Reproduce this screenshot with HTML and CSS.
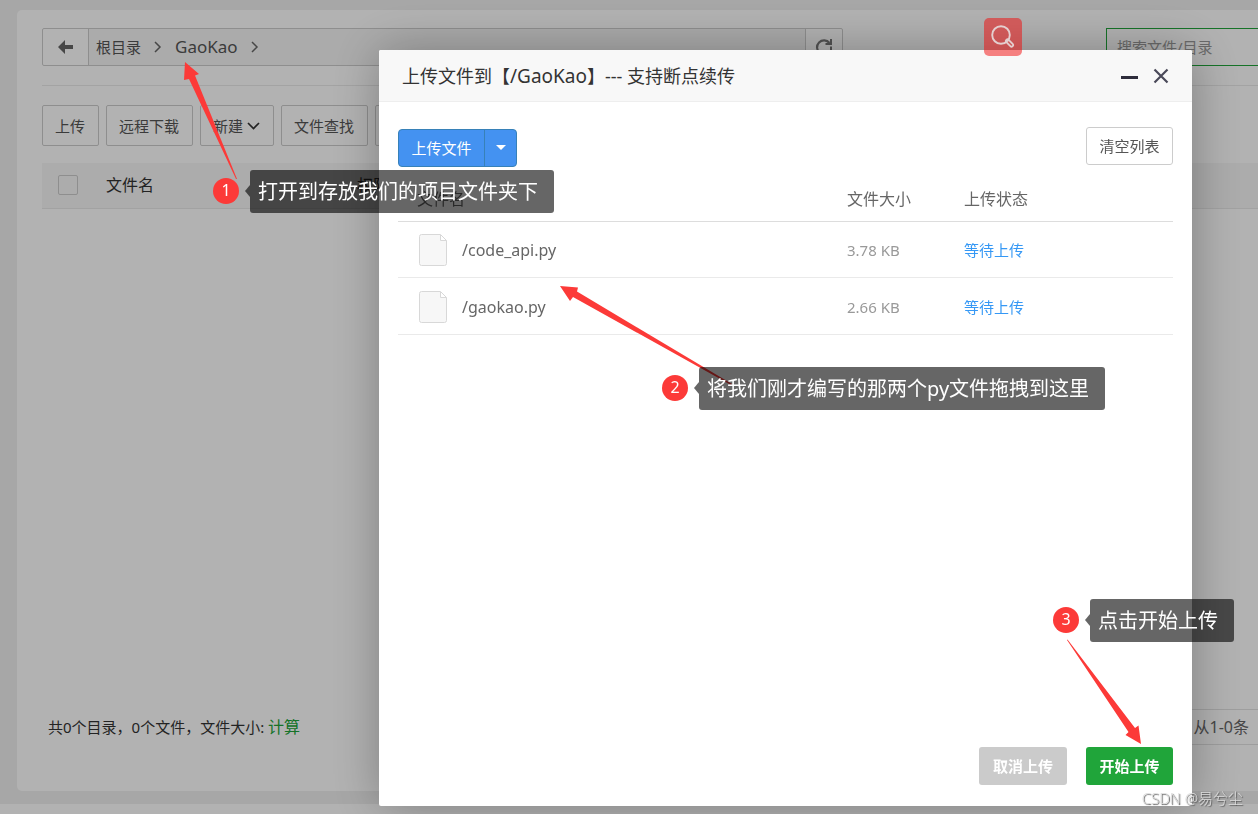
FILE: index.html
```html
<!DOCTYPE html>
<html lang="zh-CN">
<head>
<meta charset="utf-8">
<title>文件管理</title>
<link rel="stylesheet" href="styles.css">
</head>
<body>
<div class="page">
  <main class="panel">
    <div class="topbar">
      <nav class="path">
        <button class="path-back" aria-label="返回">
          <svg width="16" height="14" viewBox="0 0 16 14"><path d="M0 7 7 0V5H15V9H7V14Z" fill="#666"/></svg>
        </button>
        <div class="crumbs">
          <a href="#">根目录</a>
          <svg width="8" height="12" viewBox="0 0 8 12"><path d="M1 1 6 6 1 11" fill="none" stroke="#666" stroke-width="1.5"/></svg>
          <a href="#" class="crumb-latin">GaoKao</a>
          <svg width="8" height="12" viewBox="0 0 8 12"><path d="M1 1 6 6 1 11" fill="none" stroke="#666" stroke-width="1.5"/></svg>
        </div>
        <button class="path-refresh" aria-label="刷新">
          <svg width="18" height="18" viewBox="0 0 18 18"><path d="M14.500 5A7 7 0 1 0 15 13" fill="none" stroke="#777" stroke-width="2.200"/><path d="M16 1V6H10.500" fill="none" stroke="#777" stroke-width="2"/><path d="M16 8.500V12" stroke="#777" stroke-width="2"/></svg>
        </button>
      </nav>
      <input class="search" type="text" placeholder="搜索文件/目录" aria-label="搜索文件/目录">
    </div>
    <div class="toolbar">
      <button class="tool">上传</button>
      <button class="tool">远程下载</button>
      <button class="tool">新建 <svg width="13" height="8" viewBox="0 0 13 8"><path d="M1 1 6.500 6.500 12 1" fill="none" stroke="#333" stroke-width="1.700"/></svg></button>
      <button class="tool">文件查找</button>
      <button class="tool">收藏夹</button>
    </div>
    <table class="files">
      <thead><tr>
        <th class="col-check"><input type="checkbox" aria-label="全选"></th>
        <th class="col-name">文件名</th>
        <th>权限</th>
      </tr></thead>
    </table>
    <div class="summary">
      <p>共0个目录，0个文件，文件大小: <a href="#">计算</a></p>
      <span class="pager">从1-0条</span>
    </div>
  </main>
  <footer class="strip"></footer>
</div>

<div class="shade"></div>

<section class="dialog" role="dialog" aria-labelledby="dialog-title">
  <header class="dialog-head">
    <h1 id="dialog-title">上传文件到【<span class="dir">/GaoKao</span>】--- 支持断点续传</h1>
    <div class="dialog-controls">
      <button aria-label="最小化"><svg width="17" height="16" viewBox="0 0 17 16"><path d="M0 9.500H17" stroke="#2e2d3c" stroke-width="3"/></svg></button>
      <button aria-label="关闭"><svg width="16" height="16" viewBox="0 0 16 16"><path d="M1.500 1.500 14.500 14.500M14.500 1.500 1.500 14.500" stroke="#4a4959" stroke-width="2.200"/></svg></button>
    </div>
  </header>
  <div class="dialog-body">
    <div class="upload-bar">
      <div class="split">
        <button class="split-main">上传文件</button>
        <button class="split-more" aria-label="更多"><svg width="10" height="6" viewBox="0 0 10 6"><path d="M0 0H10L5 5Z" fill="#fff"/></svg></button>
      </div>
      <button class="clear">清空列表</button>
    </div>
    <table class="queue">
      <thead><tr><th class="q-name">文件名</th><th class="q-size">文件大小</th><th class="q-state">上传状态</th></tr></thead>
      <tbody>
        <tr>
          <td><div class="file"><svg width="28" height="32" viewBox="0 0 28 32"><path d="M2.500 .5H21L27.500 7V29.500Q27.500 31.500 25.500 31.500H2.500Q.5 31.500 .5 29.500V2.500Q.5 .5 2.500 .5Z" fill="#f7f7f7" stroke="#d8d8d8"/><path d="M21.500 .5V6.500H27.500Z" fill="#fff" stroke="#d8d8d8"/></svg>/code_api.py</div></td>
          <td class="size">3.78 KB</td><td class="state">等待上传</td>
        </tr>
        <tr>
          <td><div class="file"><svg width="28" height="32" viewBox="0 0 28 32"><path d="M2.500 .5H21L27.500 7V29.500Q27.500 31.500 25.500 31.500H2.500Q.5 31.500 .5 29.500V2.500Q.5 .5 2.500 .5Z" fill="#f7f7f7" stroke="#d8d8d8"/><path d="M21.500 .5V6.500H27.500Z" fill="#fff" stroke="#d8d8d8"/></svg>/gaokao.py</div></td>
          <td class="size">2.66 KB</td><td class="state">等待上传</td>
        </tr>
      </tbody>
    </table>
    <div class="dialog-actions">
      <button class="cancel">取消上传</button>
      <button class="start">开始上传</button>
    </div>
  </div>
</section>

<div class="lens"><svg width="24" height="24" viewBox="0 0 24 24" fill="none" stroke="#e4cfcf"><circle cx="10" cy="10" r="8.800" stroke-width="1.900"/><path d="M16.500 16 20.500 20" stroke-width="5" stroke-linecap="round"/><path d="M17.500 17 20.500 20" stroke="#cd5c5c" stroke-width="1.600" stroke-linecap="round"/></svg></div>

<svg class="arrows" width="1258" height="814" viewBox="0 0 1258 814" fill="#fc3a38">
  <path d="M185 62 199 74 195 75.500 237 179 236 179 189 79 184 80Z"/>
  <path d="M560 286 578 287.500 577 291.500 732 384 731 385 573 297 570 301Z"/>
  <path d="M1141 744 1138.500 725.500 1135 728 1067.500 639.500 1067 640 1128.500 732 1125.500 735Z"/>
</svg>

<div class="note note-one"><span class="num">1</span><p>打开到存放我们的项目文件夹下</p></div>
<div class="note note-two"><span class="num">2</span><p>将我们刚才编写的那两个py文件拖拽到这里</p></div>
<div class="note note-three"><span class="num">3</span><p>点击开始上传</p></div>
<div class="watermark">CSDN @易兮尘</div>
</body>
</html>
```

FILE: styles.css
```css
* { box-sizing: border-box; }
body {
  margin: 0;
  overflow: hidden;
  background: #f0f0f0;
  color: #333;
  font: 400 15px/20px "Noto Sans", "Noto Sans CJK SC", sans-serif;
}
button, input { font: inherit; color: inherit; }
button { padding: 0; border: 0; background: none; white-space: nowrap; }
h1, p { margin: 0; }
a { color: inherit; text-decoration: none; }
table { width: 100%; border-collapse: collapse; }
th, td { padding: 0; font-weight: 400; text-align: left; }
svg { display: block; flex: none; }

.page { display: flex; flex-direction: column; min-height: 100vh; }
.panel {
  flex: 1;
  display: flex;
  flex-direction: column;
  margin: 10px 0 13px 17px;
  padding: 18px 0 46px 25px;
  border-radius: 5px 0 0 5px;
  background: #fff;
}
.strip { height: 10px; background: #fff; }

.topbar {
  display: flex;
  gap: 263px;
  padding-bottom: 19px;
  border-bottom: 1px solid #eaeaea;
}
.path { flex: 1; display: flex; height: 38px; border: 1px solid #ccc; border-radius: 2px; }
.path button { display: flex; align-items: center; justify-content: center; }
.path-back { width: 46px; border-right: 1px solid #ccc; }
.path-refresh { width: 37px; border-left: 1px solid #ccc; }
.crumbs {
  flex: 1;
  display: flex;
  align-items: center;
  gap: 13px;
  padding-left: 7px;
  background: #f5f5f5;
  color: #555;
}
.crumb-latin { font-size: 17px; }
.search {
  width: 152px;
  height: 38px;
  padding: 0 10px;
  border: 1px solid #20a53a;
  border-right: 0;
  border-radius: 0;
  background: #fff;
}
.search::placeholder { color: #999; opacity: 1; }

.toolbar { display: flex; gap: 7px; padding: 19px 0 17px; }
.tool {
  display: flex;
  align-items: center;
  gap: 4px;
  height: 41px;
  padding: 0 13px 0 12px;
  border: 1px solid #ccc;
  border-radius: 2px;
  color: #555;
}

.files th { height: 45px; border-bottom: 1px solid #e8e8e8; background: #f6f6f6; font-size: 16px; }
.files .col-check { width: 64px; padding-left: 16px; }
.files .col-name { width: 251px; }
.files input {
  display: block;
  appearance: none;
  width: 20px;
  height: 20px;
  margin: 0;
  border: 1px solid #ccc;
  border-radius: 2px;
}
.summary { display: flex; align-items: center; justify-content: space-between; margin-top: auto; padding-left: 6px; }
.summary a { font-size: 16px; color: #20a53a; }
.pager {
  padding: 7px 9px;
  border: solid #e2e2e2;
  border-width: 1px 0;
  color: #666;
  font-size: 16px;
}

.shade { position: fixed; inset: 0; background: rgba(0, 0, 0, .3); }

.dialog {
  position: fixed;
  inset: 50px 66px 8px 379px;
  display: flex;
  flex-direction: column;
  border-radius: 2px;
  background: #fff;
  box-shadow: 1px 1px 50px rgba(0, 0, 0, .3);
}
.dialog-head {
  display: flex;
  align-items: center;
  justify-content: space-between;
  height: 52px;
  padding: 0 23px;
  border-bottom: 1px solid #eee;
  border-radius: 2px 2px 0 0;
  background: #f8f8f8;
}
.dialog-head h1 { font-size: 18px; line-height: 24px; font-weight: 400; }
.dialog-head .dir { font-size: 19px; }
.dialog-controls { display: flex; gap: 15px; }
.dialog-body { flex: 1; display: flex; flex-direction: column; padding: 25px 19px 21px; }
.upload-bar { display: flex; align-items: flex-end; justify-content: space-between; height: 40px; }
.split {
  display: flex;
  height: 38px;
  border: 1px solid #3781b8;
  border-radius: 4px;
  background: #4492f1;
  color: #fff;
}
.split-main { width: 85px; }
.split-more { display: flex; align-items: center; justify-content: center; width: 32px; border-left: 1px solid #3781b8; }
.clear { align-self: flex-start; width: 87px; height: 38px; border: 1px solid #ccc; border-radius: 3px; color: #555; }

.queue { table-layout: fixed; color: #666; font-size: 16px; }
.queue th { height: 54px; padding-top: 10px; border-bottom: 1px solid #ddd; }
.queue td { height: 56px; padding-top: 2px; border-bottom: 1px solid #eaeaea; }
.queue tr:last-child td { height: 57px; }
.queue .q-name { padding-left: 19px; }
.queue .q-size { width: 117px; }
.queue .q-state { width: 209px; }
.file { display: flex; align-items: center; gap: 15px; padding-left: 21px; }
.queue .size { color: #999; font-size: 15px; }
.queue .state { color: #3598f5; font-size: 15px; }

.dialog-actions { display: flex; justify-content: flex-end; gap: 19px; margin-top: auto; }
.dialog-actions button { height: 38px; border-radius: 3px; color: #fff; font-weight: 700; }
.dialog-actions .cancel { width: 88px; background: #cbcbcb; }
.dialog-actions .start { width: 87px; background: #20a53a; }

.lens {
  position: fixed;
  top: 18px;
  left: 984px;
  display: flex;
  align-items: center;
  justify-content: center;
  width: 38px;
  height: 38px;
  border-radius: 5px;
  background: rgba(241, 8, 8, .5);
}
.arrows { position: fixed; top: 0; left: 0; }

.note { position: fixed; display: flex; align-items: flex-start; gap: 11px; }
.note-one { top: 170px; left: 213px; }
.note-two { top: 367px; left: 662px; }
.note-three { top: 599px; left: 1053px; }
.num {
  width: 26px;
  height: 26px;
  margin-top: 8px;
  border-radius: 50%;
  background: #fc3a38;
  color: #fff;
  font-size: 16px;
  line-height: 25px;
  text-align: center;
}
.note p {
  position: relative;
  padding: 8px 16px 8px 8px;
  border-radius: 3px;
  background: rgba(0, 0, 0, .6);
  color: #fff;
  font-size: 20px;
  line-height: 27px;
  white-space: nowrap;
}
.note p::before {
  content: "";
  position: absolute;
  top: 15px;
  right: 100%;
  border: solid transparent;
  border-width: 6px 5px 6px 0;
  border-right-color: rgba(0, 0, 0, .6);
}
.watermark {
  position: fixed;
  right: 15px;
  bottom: 6px;
  color: #ddd;
  font-size: 15px;
  font-weight: 300;
  text-shadow: 1px 1px 1px #555;
}
```
